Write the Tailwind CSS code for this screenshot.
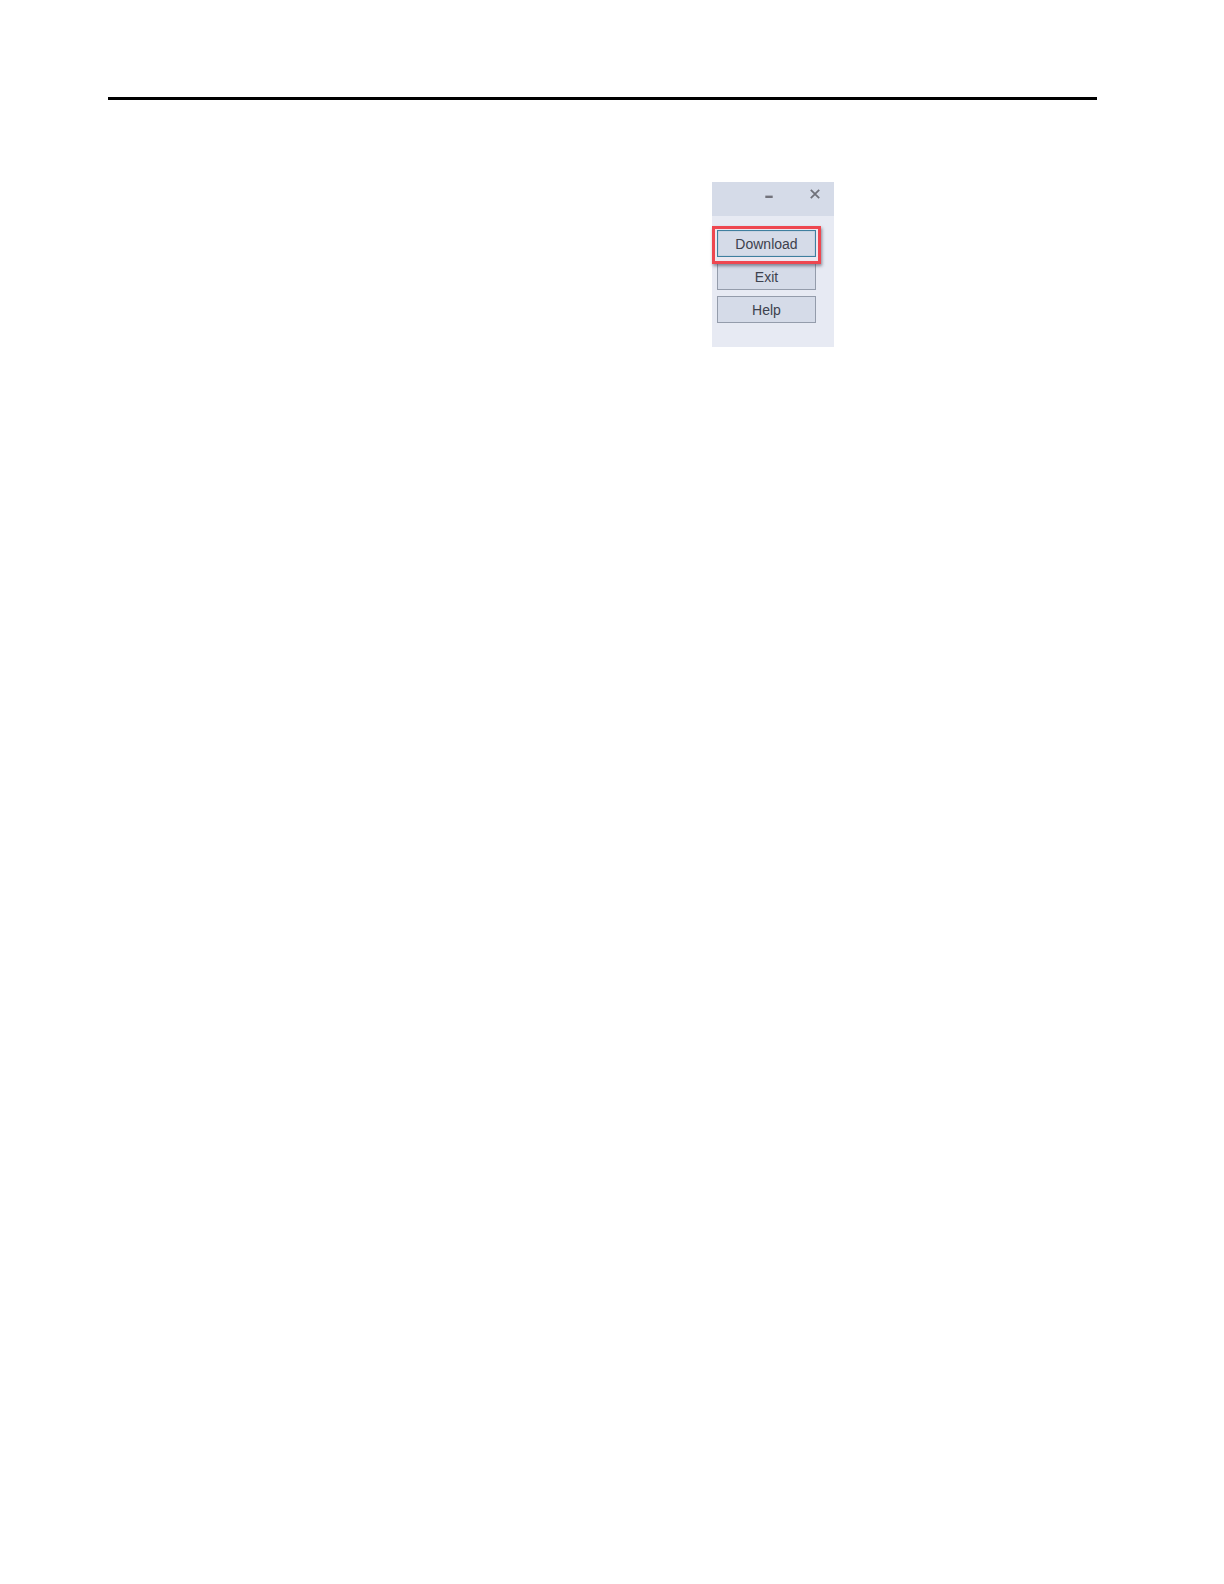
<!doctype html>
<html lang="en">

<head>
    <meta charset="UTF-8" />
    <meta name="viewport" content="width=device-width, initial-scale=1.0" />
    <title>Download</title>
    <script src="https://cdn.jsdelivr.net/npm/@tailwindcss/browser@4"></script>
</head>

<body class="bg-white font-['Liberation_Sans',Arial,sans-serif]">
    <div class="pt-[97px] pl-[108px] pr-[127px]">
        <hr class="border-0 h-[3px] bg-black">

        <!-- dialog -->
        <div class="mt-[82px] ml-[604px] w-[122px] bg-[#e7eaf3]">
            <!-- title bar -->
            <div class="h-[34px] bg-[#d5dbe8] flex justify-end gap-9 pr-[14px] pt-[7px]">
                <button aria-label="Minimize" class="w-[10px] h-[10px]">
                    <svg viewBox="0 0 10 10" class="block w-[10px] h-[10px]">
                        <path d="M1.3 7.8H8.7" stroke="#73737c" stroke-width="2.4" />
                    </svg>
                </button>
                <button aria-label="Close" class="w-[10px] h-[10px]">
                    <svg viewBox="0 0 10 10" class="block w-[10px] h-[10px]">
                        <path d="M.8 .8L9.2 9.2M9.2 .8L.8 9.2" stroke="#70727b" stroke-width="1.8" />
                    </svg>
                </button>
            </div>

            <!-- buttons -->
            <div class="relative flex flex-col gap-[6px] pt-[14px] pb-6 pl-[5px] pr-[18px] text-sm text-[#3d414d]">
                <button class="relative z-10 h-[27px] border border-[#3f7f9f] bg-[#d5dbe8] shadow-[inset_0_0_1px_#5686a3]">Download</button>
                <button class="h-[27px] border border-[#949cab] bg-[#d5dbe8]">Exit</button>
                <button class="h-[27px] border border-[#949cab] bg-[#d5dbe8]">Help</button>
                <!-- highlight -->
                <div class="absolute top-[10px] left-0 w-[109px] h-[38px] border-3 border-[#ee4750] bg-[#ece8f0] shadow-[1px_2px_3px_rgba(70,70,90,0.6)]"></div>
            </div>
        </div>
    </div>
</body>

</html>
